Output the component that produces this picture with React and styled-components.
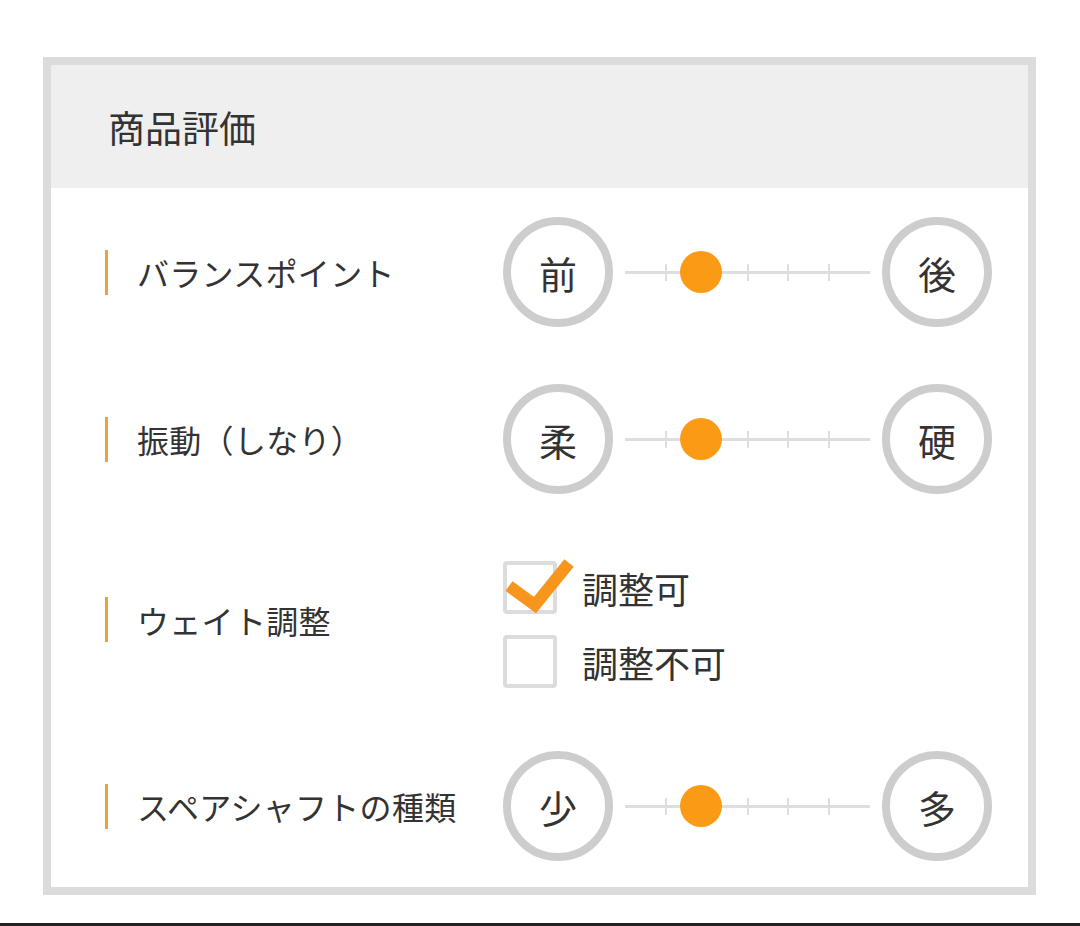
import React from "react";
import styled, { createGlobalStyle } from "styled-components";

const GlobalStyle = createGlobalStyle`
  html, body {
    margin: 0;
    padding: 0;
    background: #fff;
  }
  body {
    font-family: "Noto Sans CJK JP", "Noto Sans", sans-serif;
    color: #333;
  }
`;

const Page = styled.div`
  box-sizing: border-box;
  height: 926px;
  padding: 57px 0 0 43px;
  border-bottom: 3px solid #222;
`;

const Panel = styled.section`
  box-sizing: border-box;
  width: 993px;
  border: 8px solid #dcdcdc;
  background: #fff;
`;

const Header = styled.h2`
  margin: 0;
  height: 123px;
  display: flex;
  align-items: center;
  padding-left: 57px;
  background: #efefef;
  font-size: 37px;
  font-weight: 400;
  color: #333;
`;

const Body = styled.div`
  display: flex;
  flex-direction: column;
  gap: 57px;
  padding: 29px 0 26px;
`;

const Row = styled.div`
  display: flex;
  align-items: center;
  padding: ${(p) => (p.$tall ? "10px 0 6px" : "0")};
`;

const Label = styled.div`
  width: 452px;
  box-sizing: border-box;
  padding-left: 54px;
  margin-bottom: ${(p) => (p.$raise ? "10px" : "0")};
  display: flex;
  align-items: center;
  gap: 29px;
  font-size: 32px;
  letter-spacing: 0.3px;
  color: #333;
  white-space: nowrap;

  &::before {
    content: "";
    width: 3px;
    height: 45px;
    background: #e8a33a;
  }
`;

const Scale = styled.div`
  display: flex;
  align-items: center;
  gap: 12px;
`;

const End = styled.div`
  box-sizing: border-box;
  width: 110px;
  height: 110px;
  border-radius: 50%;
  border: 8px solid #cdcdcd;
  display: flex;
  align-items: center;
  justify-content: center;
  font-size: 38px;
  color: #333;
`;

const Track = styled.div`
  position: relative;
  width: 245px;
  height: 3px;
  background: #dedede;
`;

const Tick = styled.span`
  position: absolute;
  top: -7px;
  width: 2px;
  height: 17px;
  background: #dedede;
`;

const Knob = styled.span`
  position: absolute;
  top: -20px;
  width: 42px;
  height: 42px;
  margin-left: -21px;
  border-radius: 50%;
  background: #fb9a14;
`;

const Options = styled.div`
  display: flex;
  flex-direction: column;
  gap: 21px;
`;

const Option = styled.label`
  display: flex;
  align-items: center;
  gap: 25px;
  height: 53px;
  font-size: 36px;
  color: #333;
`;

const Box = styled.span`
  position: relative;
  box-sizing: border-box;
  width: 54px;
  height: 53px;
  border: 4px solid #dcdcdc;
  border-radius: 4px;
  background: #fff;
`;

const Check = styled.svg`
  position: absolute;
  left: -4px;
  top: -12px;
  overflow: visible;
`;

const SliderRow = ({ label, left, right, value = 2 }) => (
  <Row>
    <Label>{label}</Label>
    <Scale>
      <End>{left}</End>
      <Track>
        {[1, 2, 3, 4, 5].map((i) => (
          <Tick key={i} style={{ left: `${(i * 245) / 6 - 1}px` }} />
        ))}
        <Knob style={{ left: `${(value * 245) / 6 - 6}px` }} />
      </Track>
      <End>{right}</End>
    </Scale>
  </Row>
);

const CheckOption = ({ checked, children }) => (
  <Option>
    <Box>
      {checked && (
        <Check width="70" height="60" viewBox="0 0 70 60">
          <polyline
            points="6,33 32,52 66,10"
            fill="none"
            stroke="#f7951d"
            strokeWidth="12"
            strokeLinejoin="miter"
          />
        </Check>
      )}
    </Box>
    {children}
  </Option>
);

export default function App() {
  return (
    <Page>
      <GlobalStyle />
      <Panel>
        <Header>商品評価</Header>
        <Body>
          <SliderRow label="バランスポイント" left="前" right="後" />
          <SliderRow label="振動（しなり）" left="柔" right="硬" />
          <Row $tall>
            <Label $raise>ウェイト調整</Label>
            <Options>
              <CheckOption checked>調整可</CheckOption>
              <CheckOption>調整不可</CheckOption>
            </Options>
          </Row>
          <SliderRow label="スペアシャフトの種類" left="少" right="多" />
        </Body>
      </Panel>
    </Page>
  );
}
